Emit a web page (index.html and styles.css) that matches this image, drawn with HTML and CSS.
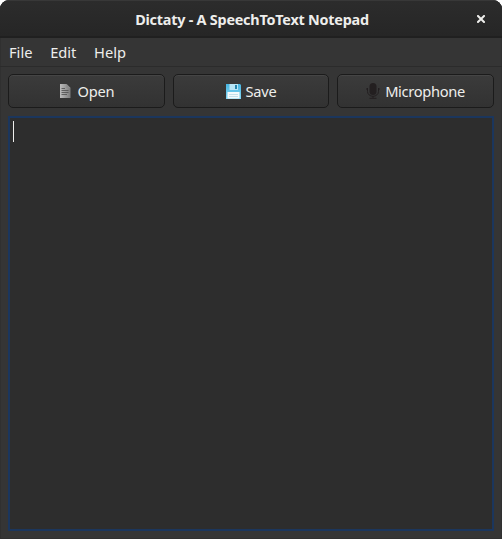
FILE: index.html
```html
<!DOCTYPE html>
<html lang="en">
<head>
<meta charset="utf-8">
<title>Dictaty - A SpeechToText Notepad</title>
<link rel="stylesheet" href="styles.css">
</head>
<body>
<div class="window">
  <header class="titlebar">
    <span class="spacer"></span>
    <h1 class="title">Dictaty - A SpeechToText Notepad</h1>
    <span class="close"><svg width="8" height="8" viewBox="0 0 8 8"><path d="M1 1L7 7M7 1L1 7" stroke="#eeeeec" stroke-width="2" stroke-linecap="square"/></svg></span>
  </header>
  <nav class="menubar"><span>File</span><span>Edit</span><span>Help</span></nav>
  <main class="content">
    <div class="toolbar">
      <div class="button">
        <svg class="icon-page" width="12" height="14" viewBox="0 0 12 14">
          <defs><linearGradient id="page" x1="0" x2="1"><stop offset="0" stop-color="#bcbcbc"/><stop offset="1" stop-color="#7c7c7c"/></linearGradient></defs>
          <path d="M1 0H7.5L11.5 4V14H1Z" fill="url(#page)"/>
          <path d="M7.5 0V4H11.5Z" fill="#8c8c8c"/>
          <path d="M2.5 4.5H6M2.5 6.5H9.5M2.5 8.5H9.5M2.5 10.5H8" stroke="#4c4c4c" stroke-width=".8"/>
        </svg>
        <span>Open</span>
      </div>
      <div class="button">
        <svg class="icon-disk" width="15" height="15" viewBox="0 0 15 15">
          <defs><linearGradient id="disk" x2="0" y2="1"><stop offset="0" stop-color="#48b5e0"/><stop offset="1" stop-color="#83d7f5"/></linearGradient></defs>
          <path d="M0 0H14L15 1V15H0Z" fill="url(#disk)"/>
          <path d="M3.5 0H12V6H3.5Z" fill="#b9e6f6"/>
          <path d="M9 1H11V5H9Z" fill="#2786ad"/>
          <path d="M1.5 8H13.5V14.5H1.5Z" fill="#f3fafc"/>
          <path d="M3 10.5H12M3 12.5H12" stroke="#b8dbe7" stroke-width=".8"/>
        </svg>
        <span>Save</span>
      </div>
      <div class="button">
        <svg class="icon-mic" width="14" height="16" viewBox="0 0 14 16">
          <rect x="3.5" y="0" width="7" height="12" rx="3.5" fill="#231f20"/>
          <path d="M1.5 5V8.5A5.5 4.8 0 0 0 12.5 8.5V5M0 6H2M12 6H14M7 13V15M3.5 15.3H10.5" fill="none" stroke="#231f20" stroke-width="1"/>
        </svg>
        <span class="label-mic">Microphone</span>
      </div>
    </div>
    <div class="editor"><span class="caret"></span></div>
  </main>
</div>
</body>
</html>
```
FILE: styles.css
```css
* { box-sizing: border-box; }
body {
  margin: 0;
  background: #fff;
  color: #eeeeec;
  font: 14.667px/20px "Noto Sans", sans-serif;
}
.window {
  height: 539px;
  display: flex;
  flex-direction: column;
  background: #353535;
  border-radius: 9px 9px 0 0;
  box-shadow: inset 0 0 0 1px #303030;
  overflow: hidden;
}
.titlebar {
  height: 38px;
  display: grid;
  grid-template-columns: 42px 1fr 42px;
  align-items: center;
  background: linear-gradient(#2c2c2c, #262626);
  border-top: 1px solid #383838;
  border-bottom: 2px solid #202020;
}
.title {
  margin: 2px 0 0 2px;
  font-size: 14.4px;
  line-height: 20px;
  font-weight: 700;
  letter-spacing: -.23px;
  text-align: center;
  white-space: nowrap;
}
.close { display: flex; justify-content: center; padding-top: 1px; }
.menubar {
  height: 29px;
  display: flex;
  gap: 17.7px;
  padding: 4px 9px 0;
  border-bottom: 1px solid #2b2b2b;
}
.content {
  flex: 1;
  display: flex;
  flex-direction: column;
  gap: 8px;
  padding: 7px 8px 8px;
}
.toolbar { display: grid; grid-template-columns: 157px 156px 157px; gap: 8px; }
.button {
  height: 34px;
  display: flex;
  align-items: center;
  justify-content: center;
  border: 1px solid #1b1b1b;
  border-radius: 5px;
  background: linear-gradient(#3b3b3b, #323232);
  box-shadow: inset 0 1px #454545;
  letter-spacing: -.25px;
}
.icon-page { margin-right: 7px; }
.icon-disk { margin-right: 5px; }
.icon-mic { margin-right: 5px; }
.label-mic { letter-spacing: -.33px; }
.editor {
  flex: 1;
  padding: 3px;
  background: #2d2d2d;
  border: 2px solid #1b365d;
}
.caret { display: block; width: 1px; height: 21px; background: #eeeeec; }
```
